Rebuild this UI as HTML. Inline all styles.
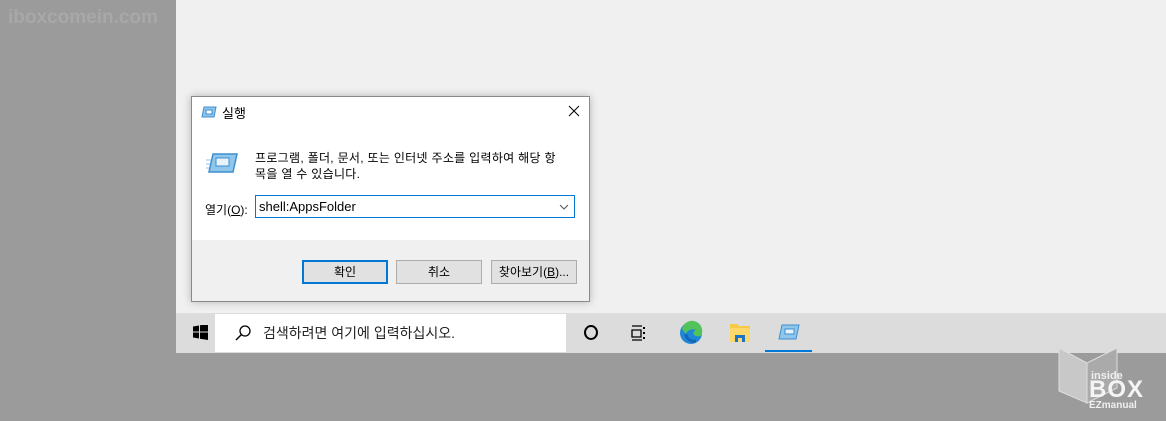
<!DOCTYPE html>
<html><head><meta charset="utf-8"><style>
*{margin:0;padding:0;box-sizing:border-box}
body{width:1166px;height:421px;background:#9b9b9b;position:relative;overflow:hidden;font-family:"Liberation Sans","Noto Sans CJK KR",sans-serif;font-size:12px;color:#000}
.abs{position:absolute}
</style></head><body>
<div class="abs" style="left:176px;top:0;width:990px;height:313px;background:#f0f0f0"></div>
<div class="abs" style="left:8px;top:7px;font-size:19px;font-weight:bold;color:#a8a8a8">iboxcomein.com</div>
<!-- dialog -->
<div class="abs" style="left:191px;top:96px;width:399px;height:206px;border:1px solid #8a8a8a;background:#fff;box-shadow:0 0 8px rgba(0,0,0,.25)">
 <svg class="abs" style="left:9px;top:9px" width="16" height="12"><path d="M3 1h12l-2 10H1z" fill="#8fc6ea" stroke="#3d8fd0"/><rect x="5" y="4" width="6" height="4" fill="#fff" stroke="#3d8fd0"/></svg>
 <div class="abs" style="left:30px;top:6px;font-size:13px">실행</div>
 <svg class="abs" style="left:376px;top:8px" width="12" height="12"><path d="M1 1l10 10M11 1L1 11" stroke="#000" stroke-width="1"/></svg>
 <svg class="abs" style="left:14px;top:55px" width="32" height="22"><path d="M7 2h24l-4 18H3z" fill="#8fc6ea" stroke="#3d8fd0" stroke-width="1.5"/><rect x="10" y="6" width="13" height="8" fill="#e8f4fc" stroke="#3d8fd0"/><path d="M0 8h5M0 12h4M0 16h3" stroke="#8fc6ea"/></svg>
 <div class="abs" style="left:63px;top:53px;line-height:16px;letter-spacing:.3px">프로그램, 폴더, 문서, 또는 인터넷 주소를 입력하여 해당 항<br>목을 열 수 있습니다.</div>
 <div class="abs" style="left:13px;top:104px">열기(<u>O</u>):</div>
 <div class="abs" style="left:63px;top:98px;width:320px;height:23px;border:1px solid #0078d7;padding:3px 3px;font-size:13px">shell:AppsFolder<svg class="abs" style="right:5px;top:8px" width="10" height="6"><path d="M1 1l4 4 4-4" fill="none" stroke="#555"/></svg></div>
 <div class="abs" style="left:0;top:143px;width:397px;height:61px;background:#f0f0f0"></div>
 <div class="abs" style="left:110px;top:163px;width:86px;height:24px;border:2px solid #0078d7;background:#e1e1e1;text-align:center;line-height:20px">확인</div>
 <div class="abs" style="left:204px;top:163px;width:86px;height:24px;border:1px solid #adadad;background:#e1e1e1;text-align:center;line-height:22px">취소</div>
 <div class="abs" style="left:299px;top:163px;width:86px;height:24px;border:1px solid #adadad;background:#e1e1e1;text-align:center;line-height:22px">찾아보기(<u>B</u>)...</div>
</div>
<!-- taskbar -->
<div class="abs" style="left:176px;top:313px;width:990px;height:40px;background:#dcdcdc"></div>
<svg class="abs" style="left:193px;top:325px" width="15" height="15"><path d="M0 1.5l6-1v6H0zM7 .3l8-1.3v7.5H7zM0 7.5h6v6l-6-1zM7 7.5h8V15l-8-1.2z" fill="#000"/></svg>
<div class="abs" style="left:215px;top:314px;width:351px;height:38px;background:#fff"></div>
<svg class="abs" style="left:234px;top:324px" width="18" height="18"><circle cx="11" cy="7" r="5" fill="none" stroke="#000" stroke-width="1.3"/><path d="M7.5 10.5L2 16" stroke="#000" stroke-width="1.4"/></svg>
<div class="abs" style="left:263px;top:323px;font-size:14px;color:#222">검색하려면 여기에 입력하십시오.</div>
<div class="abs" style="left:584px;top:325px;width:14px;height:15px;border:2px solid #000;border-radius:50%"></div>
<svg class="abs" style="left:631px;top:324px" width="16" height="18"><path d="M1 2h10M1 16h10M1 6h9v7H1z" fill="none" stroke="#000" stroke-width="1.3"/><path d="M13 3v2M13 8v2M13 13v2" stroke="#000" stroke-width="2"/></svg>
<svg class="abs" style="left:678px;top:320px" width="26" height="26"><circle cx="13" cy="13" r="11" fill="#1e88d6"/><path d="M4 9a10 10 0 0 1 20 4c0 3-3 4-6 3-4-1-3-5 0-6-4-2-9 0-10 4z" fill="#52c35a"/><path d="M8 14c0 5 5 8 10 7" stroke="#1565b8" stroke-width="3" fill="none"/></svg>
<svg class="abs" style="left:729px;top:322px" width="22" height="21"><path d="M1 2h7l2 2h11v16H1z" fill="#f8c945"/><path d="M1 6h20v14H1z" fill="#fbd869"/><path d="M6 13h10v7h-3v-4h-4v4H6z" fill="#1a73c9"/></svg>
<svg class="abs" style="left:778px;top:324px" width="22" height="16"><path d="M4 1h17l-3 14H1z" fill="#8fc6ea" stroke="#3d8fd0"/><rect x="7" y="5" width="9" height="5" fill="#e8f4fc" stroke="#3d8fd0"/></svg>
<div class="abs" style="left:765px;top:350px;width:47px;height:2px;background:#0078d7"></div>
<!-- watermark logo -->
<svg class="abs" style="left:1057px;top:346px" width="105" height="72"><path d="M2 2l28 15v40L2 45z" fill="#c8c8c8" stroke="#ddd"/><path d="M30 17l30-15v40l-30 15z" fill="#aaa" stroke="#ddd"/></svg>
<div class="abs" style="left:1091px;top:371px;color:#f0f0f0;font-weight:bold;font-size:11px;line-height:10px">inside</div>
<div class="abs" style="left:1089px;top:379px;color:#f4f4f4;font-weight:bold;font-size:24px;line-height:22px;letter-spacing:1px">BOX</div>
<div class="abs" style="left:1089px;top:400px;color:#f0f0f0;font-weight:bold;font-size:10px">EZmanual</div>
</body></html>
